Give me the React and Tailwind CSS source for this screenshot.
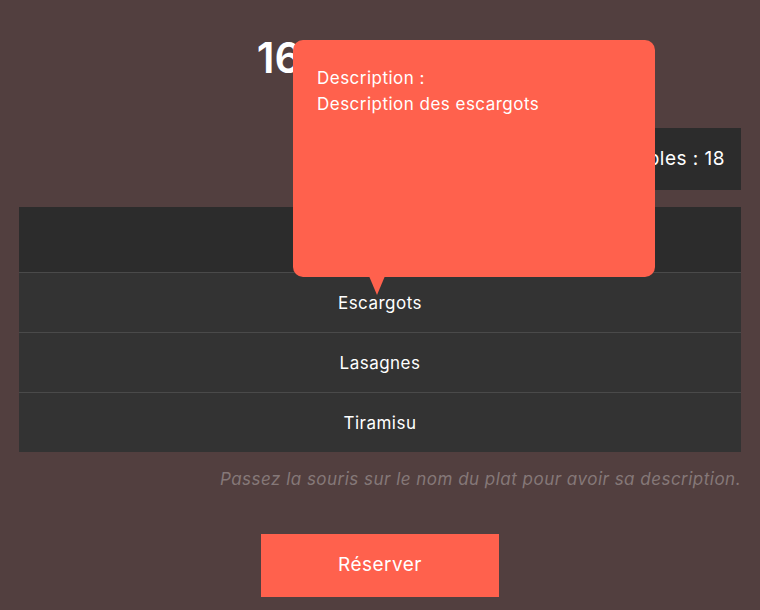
import React from 'react';

const dishes = [
    { name: 'Escargots', description: 'Description des escargots' },
    { name: 'Lasagnes', description: 'Description des lasagnes' },
    { name: 'Tiramisu', description: 'Description du tiramisu' },
];

function App() {
    const hovered = dishes[0];

    return (
        <div className="min-h-[610px] bg-[#523f3f] text-white px-[19px] pt-[28px] tracking-[0.03em]" style={{ fontFamily: 'Inter, "Open Sans", sans-serif' }}>
            <div className="relative">
                {/* titre */}
                <h1 className="text-[42px] font-semibold leading-[54px] text-center tracking-normal pt-[3px]">16 juin 2024</h1>

                {/* places restantes */}
                <div className="flex justify-end mt-[43px]">
                    <div className="bg-[#2c2c2c] h-[62px] flex items-center pl-6 pr-4 text-[19px]">
                        Nombre de places disponibles : 18
                    </div>
                </div>

                {/* menu */}
                <div className="mt-[17px]">
                    <div className="bg-[#2c2c2c] h-[65px] flex items-center justify-center text-[19px] font-semibold">
                        Menu
                    </div>
                    {dishes.map(dish => (
                        <div key={dish.name} className="bg-[#333333] h-[60px] border-t border-[#4a4a4a] flex items-center justify-center text-[17px] pt-[2px]">
                            {dish.name}
                        </div>
                    ))}
                </div>

                {/* tooltip du plat survolé */}
                <div className="absolute left-[274px] top-[12px] w-[362px] h-[237px] bg-[#ff614d] rounded-[10px] px-6 pt-[25px] text-[17px] leading-[26px]">
                    <p>Description :</p>
                    <p>{hovered.description}</p>
                    <div className="absolute left-[76px] -bottom-[18px] w-0 h-0 border-l-[8px] border-r-[8px] border-t-[19px] border-l-transparent border-r-transparent border-t-[#ff614d]"></div>
                </div>

                <p className="text-right italic text-[#857878] text-[17px] mt-[15px]">
                    Passez la souris sur le nom du plat pour avoir sa description.
                </p>

                <div className="flex justify-center mt-[41px]">
                    <button className="bg-[#ff614d] w-[238px] h-[63px] text-[19px]">Réserver</button>
                </div>
            </div>
        </div>
    );
}

export default App;
